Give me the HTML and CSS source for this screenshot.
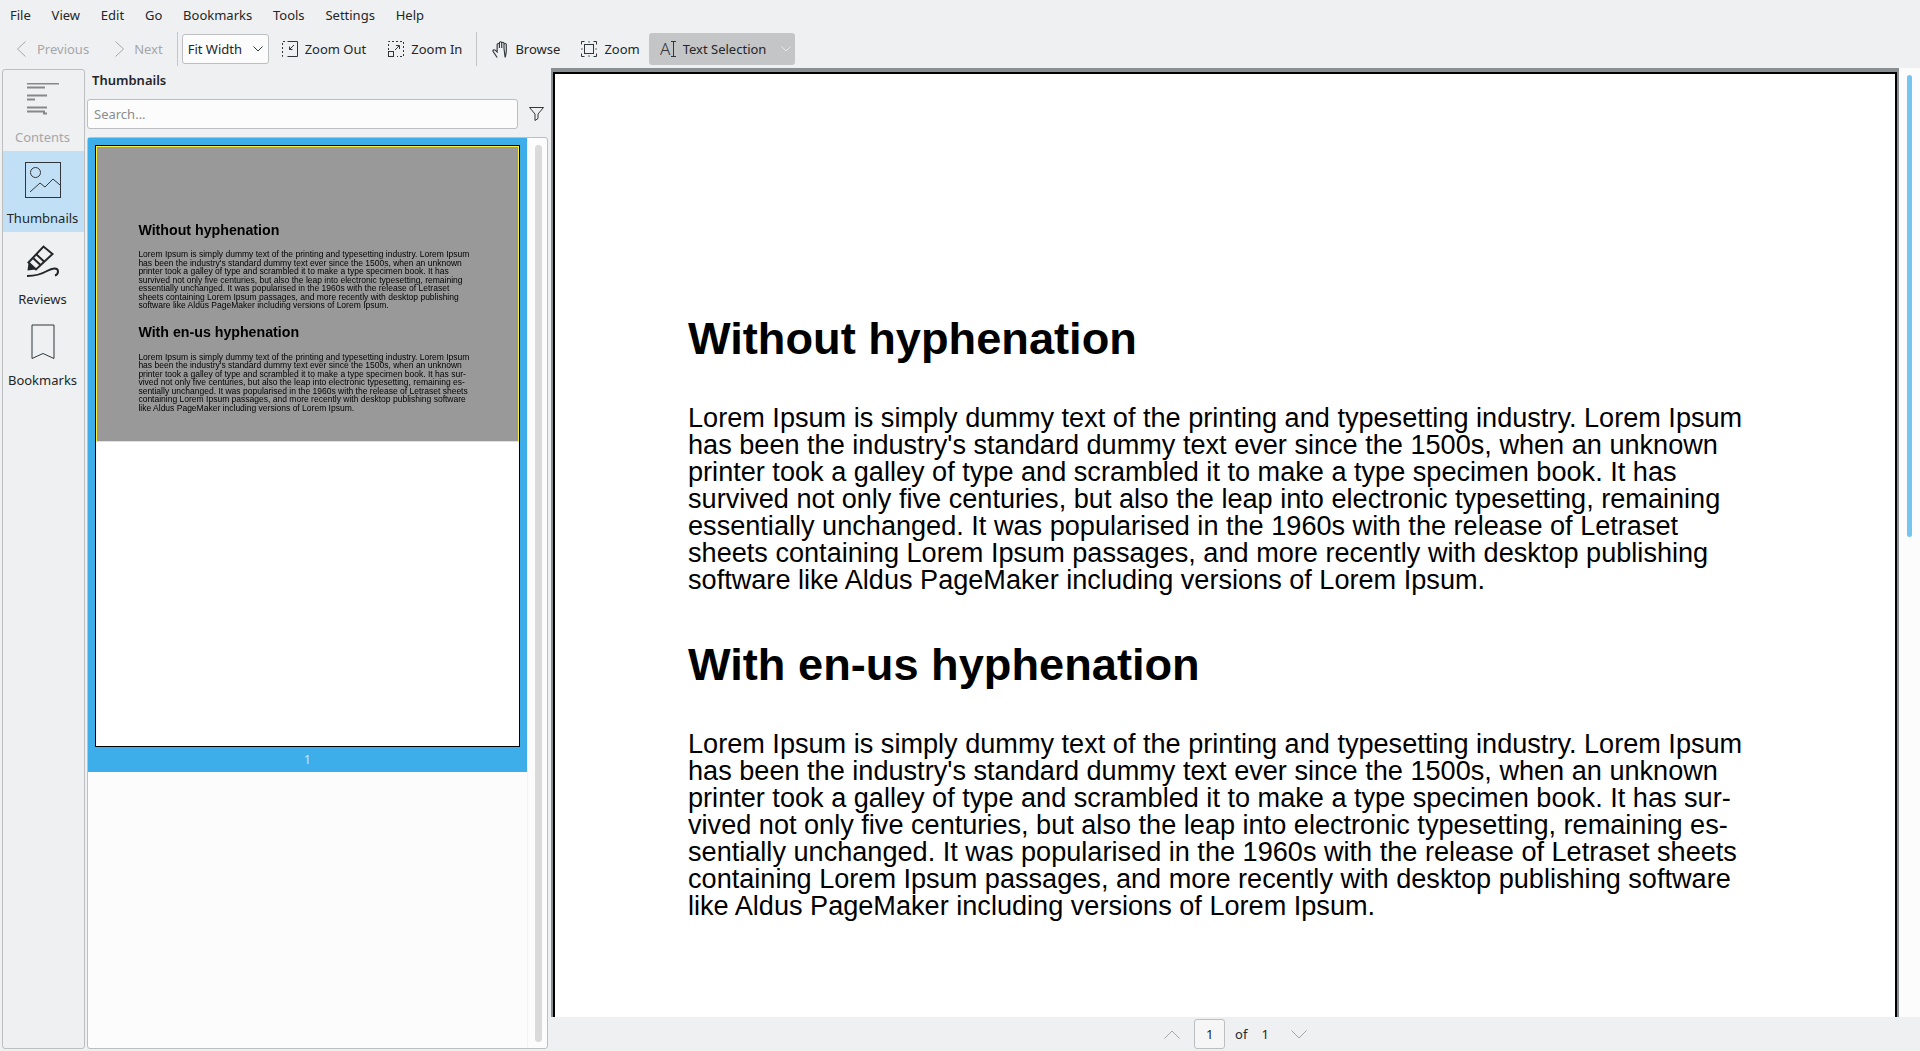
FILE: index.html
```html
<!DOCTYPE html>
<html>
  <head>
    <meta charset="UTF-8">
    <title>hyphenation.pdf - Okular</title>
    <link rel="stylesheet" href="styles.css">
  </head>
  <body>
    <div class="menubar">
      <span>File</span><span>View</span><span>Edit</span><span>Go</span><span>Bookmarks</span><span>Tools</span><span>Settings</span><span>Help</span>
    </div>

    <div class="toolbar">
      <div class="tool disabled">
        <svg width="16" height="16" viewBox="0 0 16 16"><polyline points="11.5,0.5 3.5,8 11.5,15.5"/></svg>
        <span>Previous</span>
      </div>
      <div class="tool disabled">
        <svg width="16" height="16" viewBox="0 0 16 16"><polyline points="4.5,0.5 12.5,8 4.5,15.5"/></svg>
        <span>Next</span>
      </div>
      <div class="sep"></div>
      <div class="combo">
        <span>Fit Width</span>
        <svg width="10" height="6" viewBox="0 0 10 6"><polyline points="0.5,0.5 5,5 9.5,0.5"/></svg>
      </div>
      <div class="tool first">
        <svg width="16" height="16" viewBox="0 0 16 16">
          <path d="M5.5 0.5H15.5V15.5H5.5"/>
          <path class="dashed" d="M3 0.5H0.5V15.5H3"/>
          <path d="M12 4L7.5 8.5M7.5 5.5V8.5H10.5"/>
        </svg>
        <span>Zoom Out</span>
      </div>
      <div class="tool">
        <svg width="16" height="16" viewBox="0 0 16 16">
          <path class="dashed" d="M0.5 9V0.5H15.5V15.5H9"/>
          <rect x="0.5" y="10.5" width="5" height="5"/>
          <path d="M7 9L11 5M8 4.5H11.5V8"/>
        </svg>
        <span>Zoom In</span>
      </div>
      <div class="sep"></div>
      <div class="tool browse">
        <svg width="16" height="17" viewBox="0 0 14 17" preserveAspectRatio="none">
          <path d="M4.5 16.5L1 10.5C0.3 9.3 1.8 8.2 2.8 9.2L4.5 11V3.5C4.5 2 6.5 2 6.5 3.5V7M6.5 7V1.8C6.5 0.3 8.5 0.3 8.5 1.8V7M8.5 7V2.2C8.5 0.8 10.5 0.8 10.5 2.2V7.5M10.5 7.5V3.6C10.5 2.2 12.5 2.2 12.5 3.6V10C12.5 12.5 12 14 11.5 16.5Z"/>
        </svg>
        <span>Browse</span>
      </div>
      <div class="tool zoom">
        <svg width="16" height="16" viewBox="0 0 16 16">
          <path d="M3.5 0.5H0.5V3.5M12.5 0.5H15.5V3.5M0.5 12.5V15.5H3.5M15.5 12.5V15.5H12.5"/>
          <rect x="3.5" y="3.5" width="9" height="9"/>
          <path class="mark" d="M7 0.5L8 2L9 0.5ZM7 15.5L8 14L9 15.5ZM0.5 7L2 8L0.5 9ZM15.5 7L14 8L15.5 9Z"/>
        </svg>
        <span>Zoom</span>
      </div>
      <div class="tool active">
        <svg width="16" height="16" viewBox="0 0 16 16">
          <text x="0" y="14" class="glyph">A</text>
          <path d="M11 0.5H16M13.5 0.5V15.5M11 15.5H16"/>
        </svg>
        <span>Text Selection</span>
        <svg class="arrow" width="10" height="6" viewBox="0 0 10 6"><polyline points="0.5,0.5 5,5 9.5,0.5"/></svg>
      </div>
    </div>

    <div class="main">
      <div class="leftcol">
        <div class="sidebar">
          <div class="side-item disabled">
            <svg width="32" height="32" viewBox="0 0 32 32">
              <path d="M0 0.5H32M0 4.5H18M0 12.5H20M0 16.5H8M0 24.5H20M0 28.5H18M16 30.5H20"/>
            </svg>
            <span>Contents</span>
          </div>
          <div class="side-item selected">
            <svg width="36" height="36" viewBox="0 0 36 36">
              <rect x="0.5" y="0.5" width="35" height="35"/>
              <circle cx="10.5" cy="10.5" r="5"/>
              <polyline points="5,30 15,21 20,25 28,17 35,23"/>
            </svg>
            <span>Thumbnails</span>
          </div>
          <div class="side-item">
            <svg width="32" height="34" viewBox="0 0 32 34">
              <path class="solid" d="M0.5 25.5L1.5 18L8.5 24.5Z"/>
              <path class="thick" d="M1.5 17.5L16.5 1.5L25.5 9L9 24.5ZM5.5 12.5L13.5 20M9 9L17 16.5"/>
              <path class="thick" d="M0 31C8 31 14 29.5 20 26C25 23 31 22 31 26.5C31 28.5 29.5 30 28 30.5"/>
            </svg>
            <span>Reviews</span>
          </div>
          <div class="side-item">
            <svg width="24" height="36" viewBox="0 0 24 36">
              <path d="M1 1H23V34.5L12 29.5L1 34.5Z"/>
            </svg>
            <span>Bookmarks</span>
          </div>
        </div>
      </div>

      <div class="panel">
        <div class="panel-title">Thumbnails</div>
        <div class="search-row">
          <div class="search">Search...</div>
          <svg width="15" height="14" viewBox="0 0 15 14"><path d="M0.5 0.5H14.5L9 7V11.5L6 13.5V7Z"/></svg>
        </div>
        <div class="thumb-list">
          <div class="thumb-col">
            <div class="thumb-item">
              <div class="thumb">
                <div class="thumb-page">
                  <h1>Without hyphenation</h1>
                  <p>Lorem Ipsum is simply dummy text of the printing and typesetting industry. Lorem Ipsum<br>has been the industry's standard dummy text ever since the 1500s, when an unknown<br>printer took a galley of type and scrambled it to make a type specimen book. It has<br>survived not only five centuries, but also the leap into electronic typesetting, remaining<br>essentially unchanged. It was popularised in the 1960s with the release of Letraset<br>sheets containing Lorem Ipsum passages, and more recently with desktop publishing<br>software like Aldus PageMaker including versions of Lorem Ipsum.</p>
                  <h1>With en-us hyphenation</h1>
                  <p>Lorem Ipsum is simply dummy text of the printing and typesetting industry. Lorem Ipsum<br>has been the industry's standard dummy text ever since the 1500s, when an unknown<br>printer took a galley of type and scrambled it to make a type specimen book. It has sur-<br>vived not only five centuries, but also the leap into electronic typesetting, remaining es-<br>sentially unchanged. It was popularised in the 1960s with the release of Letraset sheets<br>containing Lorem Ipsum passages, and more recently with desktop publishing software<br>like Aldus PageMaker including versions of Lorem Ipsum.</p>
                </div>
                <div class="thumb-view"></div>
              </div>
              <div class="thumb-num">1</div>
            </div>
          </div>
          <div class="thumb-scroll"><div class="groove"></div></div>
        </div>
      </div>

      <div class="viewer">
        <div class="viewer-top">
          <div class="page">
            <h1>Without hyphenation</h1>
            <p>Lorem Ipsum is simply dummy text of the printing and typesetting industry. Lorem Ipsum<br>has been the industry's standard dummy text ever since the 1500s, when an unknown<br>printer took a galley of type and scrambled it to make a type specimen book. It has<br>survived not only five centuries, but also the leap into electronic typesetting, remaining<br>essentially unchanged. It was popularised in the 1960s with the release of Letraset<br>sheets containing Lorem Ipsum passages, and more recently with desktop publishing<br>software like Aldus PageMaker including versions of Lorem Ipsum.</p>
            <h1>With en-us hyphenation</h1>
            <p>Lorem Ipsum is simply dummy text of the printing and typesetting industry. Lorem Ipsum<br>has been the industry's standard dummy text ever since the 1500s, when an unknown<br>printer took a galley of type and scrambled it to make a type specimen book. It has sur-<br>vived not only five centuries, but also the leap into electronic typesetting, remaining es-<br>sentially unchanged. It was popularised in the 1960s with the release of Letraset sheets<br>containing Lorem Ipsum passages, and more recently with desktop publishing software<br>like Aldus PageMaker including versions of Lorem Ipsum.</p>
          </div>
          <div class="view-scroll"><div class="handle"></div></div>
        </div>
        <div class="pagebar">
          <svg width="16" height="9" viewBox="0 0 16 9"><polyline points="0.5,8.5 8,1 15.5,8.5"/></svg>
          <div class="page-input">1</div>
          <span class="of">of</span>
          <span class="total">1</span>
          <svg width="16" height="9" viewBox="0 0 16 9"><polyline points="0.5,0.5 8,8 15.5,0.5"/></svg>
        </div>
      </div>
    </div>
  </body>
</html>
```

FILE: styles.css
```css
html,body {
  width:100%;
  height:100%;
  margin:0;
  overflow:hidden;
}
body {
  display:flex;
  flex-direction:column;
  background:#eff0f1;
  color:#232629;
  font-family:'Noto Sans', sans-serif;
  font-size:13px;
}
svg { flex:none; display:block; fill:none; stroke:#31363b; stroke-width:1; }

.menubar {
  display:flex;
  align-items:center;
  height:30px;
  padding-left:10px;
  gap:20.8px;
}

.toolbar {
  display:flex;
  align-items:center;
  box-sizing:border-box;
  height:36px;
  padding:2px 0 0 3px;
}
.tool {
  display:flex;
  align-items:center;
  gap:7px;
  height:32px;
  padding:0 11px;
  border-radius:3px;
  white-space:nowrap;
}
.tool.disabled { color:#a5a7a9; }
.tool.disabled svg { stroke:#a5a7a9; }
.tool.first { margin-left:2px; }
.tool.browse { padding-right:10px; }
.tool.zoom { padding-right:9px; }
.tool.active { background:#c4c5c7; padding-right:4px; }
.tool.active .arrow { margin-left:8px; stroke:#e8e9ea; }
.dashed { stroke-dasharray:2 2; }
.mark { fill:#31363b; stroke:none; }
.glyph {
  fill:#31363b;
  stroke:none;
  font-family:'Noto Sans', sans-serif;
  font-size:17px;
  font-weight:300;
}
.sep { width:1px; height:34px; background:#c4c6c8; margin:0 4px 0 3px; flex:none; }
.combo {
  display:flex;
  align-items:center;
  justify-content:space-between;
  box-sizing:border-box;
  width:87px;
  height:30px;
  padding:0 5px;
  background:#fcfcfc;
  border:1px solid #bcbebf;
  border-radius:3px;
}

.main {
  display:flex;
  flex:1;
  min-height:0;
}
.leftcol {
  width:87px;
  flex:none;
  padding:3px 0 2px 2px;
  box-sizing:border-box;
}
.sidebar {
  box-sizing:border-box;
  width:83px;
  height:100%;
  background:#eff0f1;
  border:1px solid #bcbebf;
  border-radius:3px;
}
.side-item {
  display:flex;
  flex-direction:column;
  align-items:center;
  justify-content:flex-end;
  height:81px;
  padding:0 2px 5px 0;
  box-sizing:border-box;
  gap:8px;
}
.side-item svg { margin-bottom:3px; }
.side-item.disabled { color:#a5a7a9; }
.side-item.disabled svg { stroke:#86888a; stroke-width:2; margin-bottom:5px; }
.side-item.selected { background:#c2e0f5; }
.side-item .solid { fill:#232629; stroke:none; }
.side-item .thick { stroke:#232629; stroke-width:2; }

.panel {
  display:flex;
  flex-direction:column;
  width:461px;
  flex:none;
  box-sizing:border-box;
  padding:0 0 2px 0;
}
.panel-title {
  font-weight:600;
  height:33px;
  line-height:29px;
  padding-left:5px;
}
.search-row {
  display:flex;
  align-items:center;
  gap:11px;
  height:30px;
  margin-bottom:8px;
}
.search {
  box-sizing:border-box;
  width:431px;
  height:30px;
  line-height:28px;
  padding-left:6px;
  background:#fcfcfc;
  border:1px solid #bcbebf;
  border-radius:3px;
  color:#8a8c8e;
}
.thumb-list {
  display:flex;
  flex:1;
  min-height:0;
  box-sizing:border-box;
  background:#fcfcfc;
  border:1px solid #bcbebf;
  border-radius:3px;
}
.thumb-col { width:439px; flex:none; border-right:1px solid #f3f3f4; }
.thumb-item { background:#3daee9; padding-top:7px; }
.thumb {
  position:relative;
  box-sizing:border-box;
  width:425px;
  height:602px;
  margin-left:7px;
  background:#fff;
  border:1px solid #000;
  overflow:hidden;
  filter:blur(0.3px);
}
.thumb-page {
  display:flow-root;
  width:1340px;
  transform:scale(0.314);
  transform-origin:top left;
  padding:0 0 0 135px;
  box-sizing:border-box;
}
.thumb-view {
  position:absolute;
  left:0;
  top:0;
  right:0;
  height:296px;
  box-sizing:border-box;
  background:#999;
  border:1px solid #ffef3a;
  mix-blend-mode:multiply;
}
.thumb-num {
  height:25px;
  line-height:26px;
  text-align:center;
  color:#c6ecff;
  font-size:12px;
}
.thumb-scroll { flex:1; padding:7px 6px 6px 7px; }
.groove { width:7px; height:100%; background:#dadada; border-radius:4px; }

.viewer {
  display:flex;
  flex-direction:column;
  flex:1;
  min-width:0;
  padding-left:3px;
}
.viewer-top { display:flex; flex:1; min-height:0; overflow:hidden; padding-top:2px; background:#eff0f1; }
.page {
  box-sizing:border-box;
  width:1348px;
  height:1800px;
  flex:none;
  padding:0 0 0 135px;
  background:#fff;
  border:solid #8a8f94;
  border-width:4px 2px 0 2px;
  box-shadow:0 0 0 2px #000 inset;
  font-family:'Liberation Sans', sans-serif;
  color:#000;
}
.page h1, .thumb-page h1 {
  font-family:'Liberation Sans', sans-serif;
  font-size:45.2px;
  line-height:54px;
  font-weight:700;
  color:#000;
  margin:0;
}
.page p, .thumb-page p {
  font-family:'Liberation Sans', sans-serif;
  font-size:27.12px;
  line-height:27px;
  color:#000;
  margin:38px 0 44.5px;
  white-space:nowrap;
}
.page h1:first-child, .thumb-page h1:first-child { margin-top:240px; }

.view-scroll { flex:1; background:#fcfcfc; padding:7px 8px 0 8px; }
.handle { width:5px; height:462px; background:#76c4f0; border-radius:3px; }

.pagebar {
  display:flex;
  align-items:center;
  justify-content:center;
  gap:12px;
  height:34px;
  flex:none;
  background:#eff0f1;
}
.pagebar svg { stroke:#a5a7a9; }
.page-input {
  box-sizing:border-box;
  width:31px;
  height:30px;
  line-height:28px;
  text-align:center;
  background:#f6f6f7;
  border:1px solid #bcbebf;
  border-radius:3px;
  margin-left:2px;
}
.of { margin-left:-2px; }
.total { margin:0 10px 0 2px; }
```
